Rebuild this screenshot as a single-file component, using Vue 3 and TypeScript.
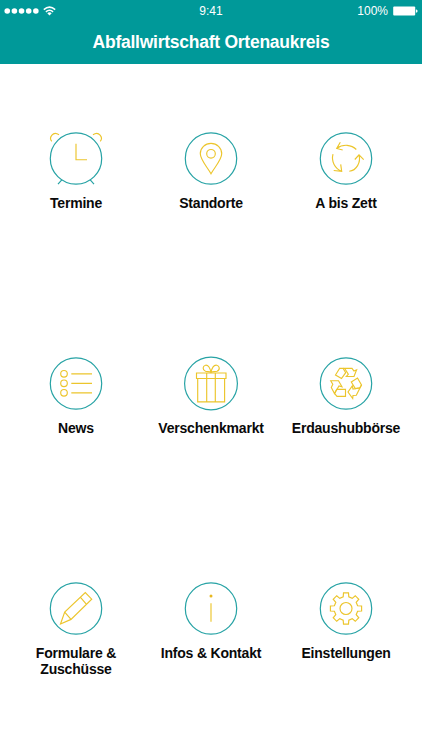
<script setup lang="ts">
interface Tile {
  icon: string
  label: string
}

const tiles: Tile[] = [
  { icon: 'clock', label: 'Termine' },
  { icon: 'pin', label: 'Standorte' },
  { icon: 'cycle', label: 'A bis Zett' },
  { icon: 'list', label: 'News' },
  { icon: 'gift', label: 'Verschenkmarkt' },
  { icon: 'recycle', label: 'Erdaushubbörse' },
  { icon: 'pencil', label: 'Formulare & Zuschüsse' },
  { icon: 'info', label: 'Infos & Kontakt' },
  { icon: 'gear', label: 'Einstellungen' },
]

// Eight-toothed wheel outline around the origin
function gearPath(): string {
  const points: string[] = []
  const profile = [[-2.8, 11.6], [-2.5, 15.6], [2.5, 15.6], [2.8, 11.6]]
  for (let i = 0; i < 8; i++) {
    const a = (i * Math.PI) / 4
    for (const [x, y] of profile) {
      const px = x * Math.cos(a) + y * Math.sin(a)
      const py = x * Math.sin(a) - y * Math.cos(a)
      points.push(`${px.toFixed(2)} ${py.toFixed(2)}`)
    }
  }
  return `M${points.join('L')}Z`
}
const gear = gearPath()
</script>

<template>
  <div class="screen">
    <header class="header">
      <div class="status">
        <div class="signal">
          <svg class="dots" width="35" height="8" viewBox="0 0 35 8">
            <circle v-for="n in 5" :key="n" :cx="n * 7.15 - 3.9" cy="4" r="2.8" />
          </svg>
          <svg class="wifi" width="13" height="10" viewBox="0 0 13 10">
            <path d="M.8 3.6Q6.5-1.4 12.2 3.6M2.9 5.9Q6.5 2.7 10.1 5.9" />
            <path class="solid" d="M4.3 7.2Q6.5 5.5 8.7 7.2L6.5 9.5Z" />
          </svg>
        </div>
        <span class="time">9:41</span>
        <div class="power">
          <span>100%</span>
          <svg width="25" height="10" viewBox="0 0 25 10">
            <rect x=".2" y=".4" width="22" height="9.2" rx="1" />
            <path d="M22.9 3.2Q24.6 3.6 24.6 5T22.9 6.8Z" />
          </svg>
        </div>
      </div>
      <h1 class="title">Abfallwirtschaft Ortenaukreis</h1>
    </header>
    <main class="grid">
      <div v-for="tile in tiles" :key="tile.icon" class="tile">
        <svg class="icon" width="60" height="60" viewBox="-30 -29.5 60 60">
          <circle class="ring" cx="0" cy="0" :r="tile.icon === 'gift' ? 26.4 : 25.7" />
          <template v-if="tile.icon === 'clock'">
            <path d="M-24.2-17.2C-27.5-21-23-28-17-23.8M24.2-17.2C27.5-21 23-28 17-23.8M0-14.7V1.2H11" />
            <path class="ring" d="M-14.2 21.3L-18 25.6M14.2 21.3L18 25.6" />
          </template>
          <template v-else-if="tile.icon === 'pin'">
            <path d="M0 15.3C-3 9.5-10.7 1.5-10.7-4.7A10.7 10.5 0 0 1 10.7-4.7C10.7 1.5 3 9.5 0 15.3Z" />
            <circle cx="0" cy="-4.7" r="4.3" />
          </template>
          <template v-else-if="tile.icon === 'cycle'">
            <path d="M10.3-9C5.5-14-3-14.8-9.3-10M-5.7-16.2L-9.3-10L-3.3-8.5" />
            <path d="M-13-4.3C-15 3-11 10-4.3 12.8M-12.3 12L-4.3 12.8L-5.3 5.8" />
            <path d="M3.3 12.8C10.5 12 15 4 13-3.7M8.8 1L13-3.7L17.7 1.2" />
          </template>
          <template v-else-if="tile.icon === 'list'">
            <circle v-for="y in [-9.7, -0.2, 9.3]" :key="y" cx="-12" :cy="y" r="3.3" />
            <path d="M-4.7-9.7H16M-4.7-.2H16M-4.7 9.3H16" />
          </template>
          <template v-else-if="tile.icon === 'gift'">
            <path d="M-14.5-10.5H15V-5H-14.5ZM-13.3-5V18.3H13.6V-5M-4.3-10.5V18.3M4.3-10.5V18.3" />
            <path d="M0-11C-1-16-3-18.8-5.5-18.3C-8.5-17.5-8.8-13.5-5.5-12.2C-3.5-11.5-1.5-12.5 0-11C1.5-12.5 3.5-11.5 6-12.2C9.3-13.5 8.8-17.5 5.8-18.3C3-18.8 1-16 0-11Z" />
          </template>
          <template v-else-if="tile.icon === 'recycle'">
            <path d="M-10.5-8.5L-6.3-15.2H-3L-.3-10.8L-4.5-5Z" />
            <path d="M-3-15.2H6L8-12.5L10.6-13.7L8-7H.3L2.3-9.2L-1.3-15" />
            <path d="M-15.3-2.8H-7.5L-4 3.3L-7 2.5L-11.5 10L-14.7 4L-13.2.8Z" />
            <path d="M-9.3 5.8H-.5V12.8H-9L-11.5 10Z" />
            <path d="M5.3-1.5L11.5-5.5L15.5 1.5L13.7 4.3L9.3 5Z" />
            <path d="M15.5 1.5L10.3 11.8L7 12L6.7 15L2 8.5L6.3 2.3L7 5.5L13.7 4.5" />
          </template>
          <template v-else-if="tile.icon === 'pencil'">
            <path d="M-15.5 15.5L-11.3 3.6L9.3-16L15.7-9.3L-5 10.9ZM-11.3 3.6L-5 10.9M4.3-11.3L10.5-4.2" />
          </template>
          <template v-else-if="tile.icon === 'info'">
            <circle class="dot" cx="0" cy="-12.5" r="1.5" />
            <path d="M0-5.3V13.3" />
          </template>
          <template v-else>
            <path :d="gear" />
            <circle cx="0" cy="0" r="6" />
          </template>
        </svg>
        <span class="label">{{ tile.label }}</span>
      </div>
    </main>
  </div>
</template>

<style scoped>
.screen {
  height: 750px;
  background: #fff;
  font-family: "Liberation Sans", Arial, sans-serif;
}
.header {
  height: 64px;
  background: #009999;
  color: #fff;
}
.status {
  display: grid;
  grid-template-columns: 1fr auto 1fr;
  align-items: center;
  height: 22px;
  padding: 0 4px;
  font-size: 12px;
}
.signal,
.power {
  display: flex;
  align-items: center;
}
.signal {
  gap: 4px;
}
.power {
  justify-content: flex-end;
  gap: 5px;
}
.power svg,
.dots {
  fill: #fff;
}
.wifi {
  fill: none;
  stroke: #fff;
  stroke-width: 1.5;
}
.wifi .solid {
  fill: #fff;
  stroke: none;
}
.title {
  margin: 0;
  font-size: 17.5px;
  letter-spacing: -0.25px;
  line-height: 40px;
  text-align: center;
}
.grid {
  display: grid;
  grid-template-columns: repeat(3, 135px);
  grid-template-rows: 225px 225px auto;
  justify-content: center;
  padding-top: 65px;
}
.tile {
  display: flex;
  flex-direction: column;
  align-items: center;
}
.icon {
  fill: none;
  stroke: #ecc52c;
  stroke-width: 1.15;
}
.icon .ring {
  stroke: #27a3a5;
  stroke-width: 1.2;
}
.icon .dot {
  fill: #e8b820;
  stroke: none;
}
.label {
  width: 115px;
  margin-top: 6px;
  color: #0a0a0a;
  font-size: 14px;
  font-weight: 700;
  letter-spacing: -0.2px;
  line-height: 16px;
  text-align: center;
}
</style>
